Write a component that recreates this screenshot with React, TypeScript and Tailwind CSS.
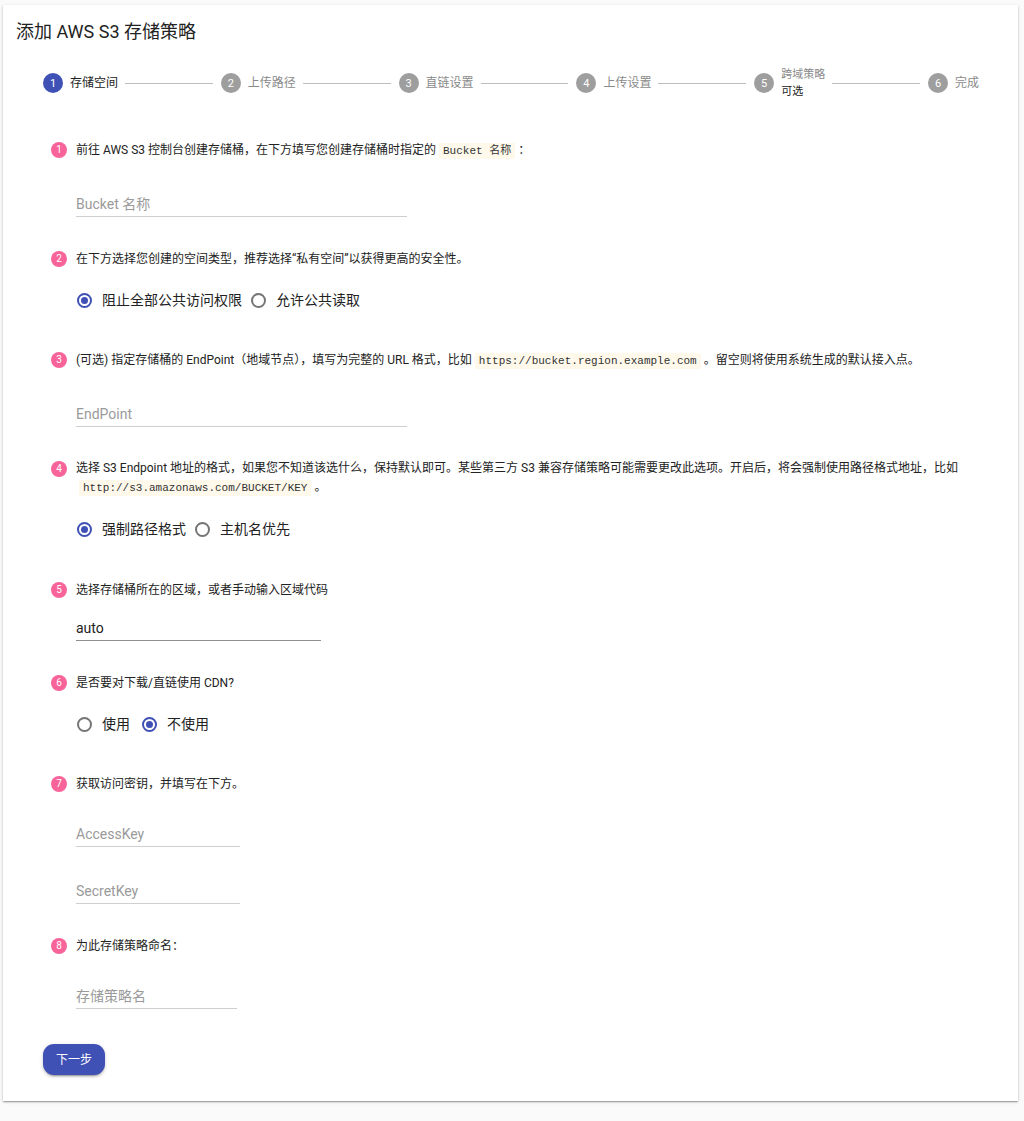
import React from "react";

const steps = [
  { n: 1, label: "存储空间" },
  { n: 2, label: "上传路径" },
  { n: 3, label: "直链设置" },
  { n: 4, label: "上传设置" },
  { n: 5, label: "跨域策略", optional: true },
  { n: 6, label: "完成" },
];

function Badge({ n }: { n: number }) {
  return (
    <span className="flex h-[16px] w-[16px] shrink-0 items-center justify-center rounded-full bg-[#f8649a] text-[10px] leading-none text-white">
      {n}
    </span>
  );
}

function Question({ n, children, className = "" }: { n: number; children: React.ReactNode; className?: string }) {
  return (
    <div className={"flex items-start pl-[11px] " + className}>
      <div className="flex h-[20px] items-center">
        <Badge n={n} />
      </div>
      <div className="ml-[9px] text-[12px] leading-[20px] text-[#222]">{children}</div>
    </div>
  );
}

function Code({ children }: { children: React.ReactNode }) {
  return (
    <code className="mx-[3px] bg-[#fff9ec] px-[4px] py-[2px] font-['Liberation_Mono','Noto_Sans_CJK_SC',monospace] text-[11px] text-[#333]">
      {children}
    </code>
  );
}

function Field({
  placeholder,
  value,
  width,
  className = "",
  dark = false,
}: {
  placeholder?: string;
  value?: string;
  width: string;
  className?: string;
  dark?: boolean;
}) {
  return (
    <div className={"ml-[36px] " + className}>
      <input
        readOnly
        placeholder={placeholder}
        defaultValue={value}
        className={
          "block h-[30px] border-b bg-transparent pt-[4px] text-[14px] text-[#222] outline-none placeholder:text-[#9a9a9a] " +
          (dark ? "border-[#8f8f8f] " : "border-[#cfcfcf] ") +
          width
        }
      />
    </div>
  );
}

function Radio({ checked, label }: { checked: boolean; label: string }) {
  return (
    <div className="flex items-center">
      <span
        className={
          "flex h-[15px] w-[15px] items-center justify-center rounded-full border-2 " +
          (checked ? "border-[#3f51b5]" : "border-[#757575]")
        }
      >
        {checked && <span className="h-[7px] w-[7px] rounded-full bg-[#3f51b5]" />}
      </span>
      <span className="ml-[10px] text-[14px] leading-[24px] text-[#222]">{label}</span>
    </div>
  );
}

function RadioRow({ items, className = "" }: { items: { label: string; checked: boolean }[]; className?: string }) {
  return (
    <div className={"ml-[37px] flex h-[24px] items-center gap-[9px] " + className}>
      {items.map((it) => (
        <Radio key={it.label} label={it.label} checked={it.checked} />
      ))}
    </div>
  );
}

export default function App() {
  return (
    <div className="min-h-[1121px] bg-[#fafafa] pl-[3px] pr-[6px] pt-[5px] font-['Roboto','Noto_Sans_CJK_SC',sans-serif]">
      <div className="bg-white pb-[26px] shadow-[0_1px_3px_rgba(0,0,0,0.2),0_1px_1px_rgba(0,0,0,0.14),0_2px_1px_-1px_rgba(0,0,0,0.12)]">
        <div className="px-[13px] pt-[15px] text-[18px] leading-[24px] text-[#222]">添加 AWS S3 存储策略</div>

        {/* Stepper */}
        <div className="ml-[40px] mr-[39px] mt-[27px] flex h-[24px] items-center">
          {steps.map((s, i) => (
            <React.Fragment key={s.n}>
              <div className="flex shrink-0 items-center">
                <span
                  className={
                    "flex h-[20px] w-[20px] items-center justify-center rounded-full text-[11px] leading-none text-white " +
                    (s.n === 1 ? "bg-[#3f51b5]" : "bg-[#9e9e9e]")
                  }
                >
                  {s.n}
                </span>
                {s.optional ? (
                  <div className="ml-[7px] flex flex-col text-[11px] leading-[17px]">
                    <span className="text-[#8a8a8a]">{s.label}</span>
                    <span className="text-[#222]">可选</span>
                  </div>
                ) : (
                  <span
                    className={
                      "ml-[7px] text-[12px] leading-[20px] " + (s.n === 1 ? "text-[#222]" : "text-[#8a8a8a]")
                    }
                  >
                    {s.label}
                  </span>
                )}
              </div>
              {i < steps.length - 1 && <div className="ml-[7px] mr-[8px] h-px flex-1 bg-[#bdbdbd]" />}
            </React.Fragment>
          ))}
        </div>

        <div className="pl-[37px] pr-[16px]">
          <Question n={1} className="mt-[45px]">
            前往 AWS S3 控制台创建存储桶，在下方填写您创建存储桶时指定的
            <Code>Bucket 名称</Code>：
          </Question>
          <Field placeholder="Bucket 名称" width="w-[331px]" className="mt-[26px]" />

          <Question n={2} className="mt-[32px]">
            在下方选择您创建的空间类型，推荐选择“私有空间”以获得更高的安全性。
          </Question>
          <RadioRow
            className="mt-[19px]"
            items={[
              { label: "阻止全部公共访问权限", checked: true },
              { label: "允许公共读取", checked: false },
            ]}
          />

          <Question n={3} className="mt-[38px]">
            (可选) 指定存储桶的 EndPoint（地域节点），填写为完整的 URL 格式，比如
            <Code>https://bucket.region.example.com</Code>。留空则将使用系统生成的默认接入点。
          </Question>
          <Field placeholder="EndPoint" width="w-[331px]" className="mt-[26px]" />

          <Question n={4} className="mt-[32px]">
            <div className="leading-[19px]">
              选择 S3 Endpoint 地址的格式，如果您不知道该选什么，保持默认即可。某些第三方 S3 兼容存储策略可能需要更改此选项。开启后，将会强制使用路径格式地址，比如
              <br />
              <Code>http://s3.amazonaws.com/BUCKET/KEY</Code>。
            </div>
          </Question>
          <RadioRow
            className="mt-[19px]"
            items={[
              { label: "强制路径格式", checked: true },
              { label: "主机名优先", checked: false },
            ]}
          />

          <Question n={5} className="mt-[39px]">
            选择存储桶所在的区域，或者手动输入区域代码
          </Question>
          <Field value="auto" width="w-[245px]" className="mt-[11px]" dark />

          <Question n={6} className="mt-[32px]">
            是否要对下载/直链使用 CDN?
          </Question>
          <RadioRow
            className="mt-[19px] gap-[12px]"
            items={[
              { label: "使用", checked: false },
              { label: "不使用", checked: true },
            ]}
          />

          <Question n={7} className="mt-[38px]">
            获取访问密钥，并填写在下方。
          </Question>
          <Field placeholder="AccessKey" width="w-[164px]" className="mt-[23px]" />
          <Field placeholder="SecretKey" width="w-[164px]" className="mt-[27px]" />

          <Question n={8} className="mt-[32px]">
            为此存储策略命名：
          </Question>
          <Field placeholder="存储策略名" width="w-[161px]" className="mt-[23px]" />

          <button className="ml-[3px] mt-[35px] flex h-[31px] w-[62px] items-center justify-center rounded-[11px] bg-[#3f51b5] text-[12px] text-white shadow-[0_3px_1px_-2px_rgba(0,0,0,0.2),0_2px_2px_0_rgba(0,0,0,0.14),0_1px_5px_0_rgba(0,0,0,0.12)]">
            下一步
          </button>
        </div>
      </div>
    </div>
  );
}
